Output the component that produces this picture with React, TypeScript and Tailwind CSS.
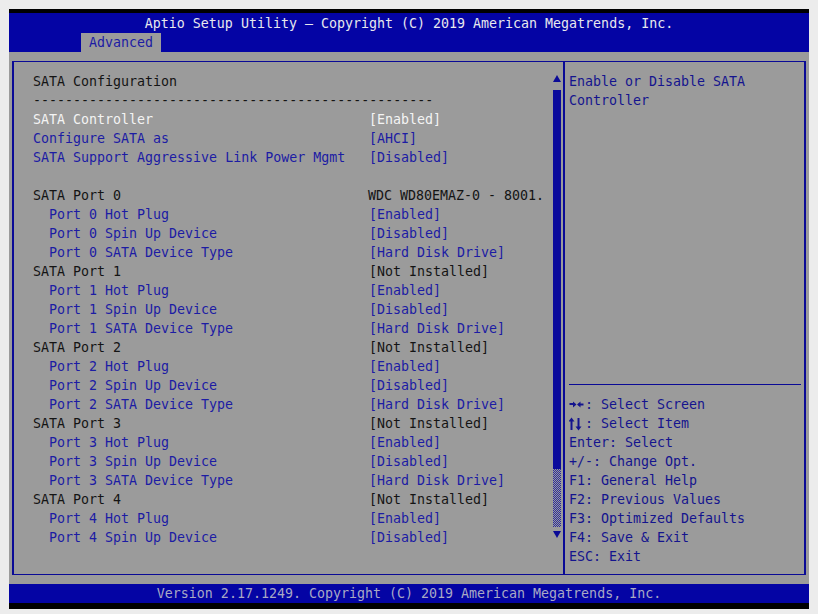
import React from "react";

type Row = { label: string; value?: string; kind: "title" | "info" | "opt" | "sel" | "blank" | "sep"; indent?: boolean };

const rows: Row[] = [
  { label: "SATA Configuration", kind: "title" },
  { label: "--------------------------------------------------", kind: "sep" },
  { label: "SATA Controller", value: "[Enabled]", kind: "sel" },
  { label: "Configure SATA as", value: "[AHCI]", kind: "opt" },
  { label: "SATA Support Aggressive Link Power Mgmt", value: "[Disabled]", kind: "opt" },
  { label: "", kind: "blank" },
];

for (let i = 0; i <= 4; i++) {
  rows.push({ label: `SATA Port ${i}`, value: i === 0 ? "WDC WD80EMAZ-0 - 8001." : "[Not Installed]", kind: "info" });
  rows.push({ label: `Port ${i} Hot Plug`, value: "[Enabled]", kind: "opt", indent: true });
  rows.push({ label: `Port ${i} Spin Up Device`, value: "[Disabled]", kind: "opt", indent: true });
  if (i < 4) rows.push({ label: `Port ${i} SATA Device Type`, value: "[Hard Disk Drive]", kind: "opt", indent: true });
}

// arrow key glyphs, drawn to fill two character cells
const LeftRight = () => (
  <svg width="16" height="19" viewBox="0 0 16 19" className="block">
    <path d="M0.5 9h5" stroke="#14148e" strokeWidth="2" />
    <path d="M4 6.5 L7.5 9.5 L4 12.5 Z" fill="#14148e" />
    <path d="M9.5 9.5h5" stroke="#14148e" strokeWidth="2" />
    <path d="M11.5 6.5 L8 9.5 L11.5 12.5 Z" fill="#14148e" />
  </svg>
);

const UpDown = () => (
  <svg width="16" height="19" viewBox="0 0 16 19" className="block">
    <path d="M2.5 7v9" stroke="#14148e" strokeWidth="2" />
    <path d="M-0.5 7.5 L2.5 3.5 L5.5 7.5 Z" fill="#14148e" />
    <path d="M9.5 4v9" stroke="#14148e" strokeWidth="2" />
    <path d="M6.5 12.5 L9.5 16.5 L12.5 12.5 Z" fill="#14148e" />
  </svg>
);

const help: [React.ReactNode, string][] = [
  [<LeftRight />, ": Select Screen"],
  [<UpDown />, ": Select Item"],
  [null, "Enter: Select"],
  [null, "+/-: Change Opt."],
  [null, "F1: General Help"],
  [null, "F2: Previous Values"],
  [null, "F3: Optimized Defaults"],
  [null, "F4: Save & Exit"],
  [null, "ESC: Exit"],
];

const colorFor = (kind: Row["kind"]) => {
  if (kind === "sel") return "text-[#f4f4f4]";
  if (kind === "opt") return "text-[#1c1ca4]";
  return "text-[#141414]";
};

export default function App() {
  return (
    <div className="min-h-screen bg-[#ececec] pt-[9px] pl-[9px] font-['DejaVu_Sans_Mono',monospace] text-[13.3px] leading-[19px]">
      <div className="w-[800px] h-[600px] bg-[#9b9b9b] flex flex-col">
        <div className="h-[4px] bg-black" />
        <div className="h-[39px] bg-[#0404a4] flex flex-col">
          <div className="h-[20px] flex items-center justify-center text-[#e8e8ee] whitespace-pre">
            Aptio Setup Utility – Copyright (C) 2019 American Megatrends, Inc.
          </div>
          <div className="h-[19px] flex">
            <div className="ml-[72px] w-[80px] pl-[8px] bg-[#9b9b9b] text-[#1c1ca4]">Advanced</div>
          </div>
        </div>

        <div className="flex-1 px-[3px] py-[9px] flex">
          <div className="flex-1 flex border-x-2 border-y border-[#0a0a96]">
            <div className="w-[551px] border-r-2 border-[#0a0a96] flex">
              <div className="flex-1 pl-[19px] pt-[10px]">
                {rows.map((r, i) => (
                  <div key={i} className={`h-[19px] flex whitespace-pre ${colorFor(r.kind)}`}>
                    <div className={`w-[336px] ${r.indent ? "pl-[16px]" : ""}`}>{r.label}</div>
                    {r.value && (
                      <div className={r.value.startsWith("WDC") ? "-ml-[1px]" : ""}>{r.value}</div>
                    )}
                  </div>
                ))}
              </div>
              <div className="w-[8px] mr-[2px] flex flex-col items-center pt-[13px]">
                <svg width="8" height="7" viewBox="0 0 8 7" className="block">
                  <path d="M4 0 L8 7 L0 7 Z" fill="#0a0a96" />
                </svg>
                <div className="mt-[8px] w-[8px] h-[379px] bg-[#0a0a9c]" />
                <div className="w-[8px] h-[58px] bg-[conic-gradient(#2a2aa0_25%,#9b9b9b_0_50%,#2a2aa0_0_75%,#9b9b9b_0)] bg-[length:2px_2px]" />
                <svg width="8" height="7" viewBox="0 0 8 7" className="block mt-[4px]">
                  <path d="M0 0 L8 0 L4 7 Z" fill="#0a0a96" />
                </svg>
              </div>
            </div>

            <div className="flex-1 flex flex-col text-[#14148e]">
              <div className="pl-[4px] pt-[10px]">
                <div className="h-[19px] whitespace-pre">Enable or Disable SATA</div>
                <div className="h-[19px] whitespace-pre">Controller</div>
              </div>
              <div className="mt-auto ml-[4px] mr-[3px] border-t border-[#0a0a96] pt-[10px] pb-[8px]">
                {help.map(([icon, text], i) => (
                  <div key={i} className="h-[19px] whitespace-pre flex">
                    {icon}
                    <span>{text}</span>
                  </div>
                ))}
              </div>
            </div>
          </div>
        </div>

        <div className="h-[19px] bg-[#0404a4] flex items-center justify-center text-[#a9a9c4] whitespace-pre">
          Version 2.17.1249. Copyright (C) 2019 American Megatrends, Inc.
        </div>
        <div className="h-[6px] bg-black" />
      </div>
    </div>
  );
}
